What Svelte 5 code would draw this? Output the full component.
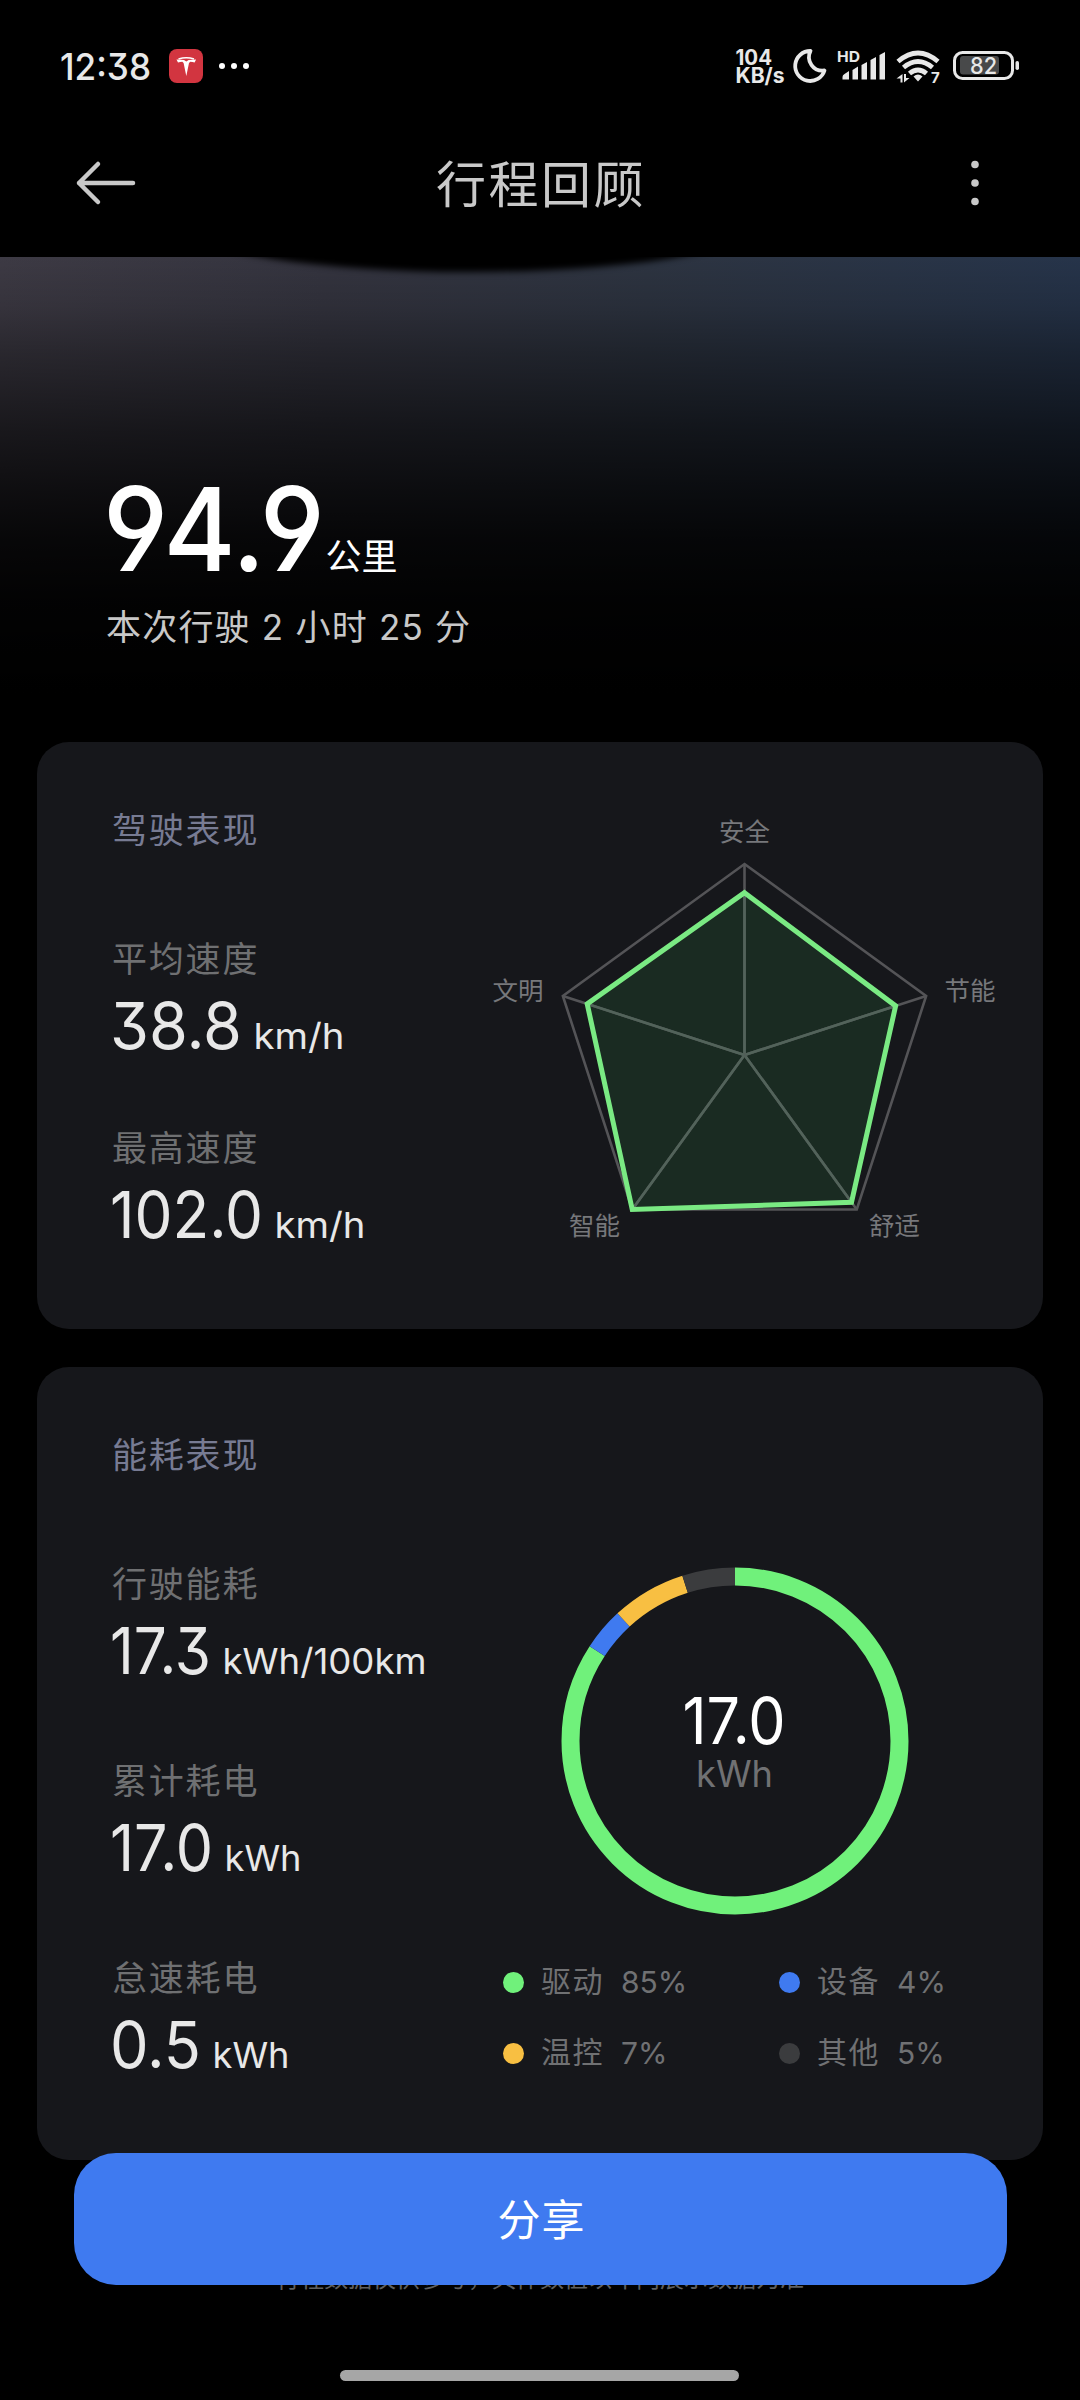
<script>
	const driving = [
		{ label: '平均速度', value: '38.8', unit: 'km/h', width: 127, unitWidth: 87 },
		{ label: '最高速度', value: '102.0', unit: 'km/h', width: 148, unitWidth: 87 }
	];

	const energy = [
		{ label: '行驶能耗', value: '17.3', unit: 'kWh/100km', width: 96, unitWidth: 200 },
		{ label: '累计耗电', value: '17.0', unit: 'kWh', width: 98, unitWidth: 73 },
		{ label: '怠速耗电', value: '0.5', unit: 'kWh', width: 86, unitWidth: 73 }
	];

	const usage = [
		{ name: '驱动', percent: 85, color: '#70f17b' },
		{ name: '设备', percent: 4, color: '#3f7af0' },
		{ name: '温控', percent: 7, color: '#f8bf42' },
		{ name: '其他', percent: 5, color: '#3b3c3e' }
	];

	const scores = [
		{ name: '安全', score: 0.85, x: 252.5, y: 61 },
		{ name: '节能', score: 0.832, x: 478, y: 219.5 },
		{ name: '舒适', score: 0.953, x: 402.5, y: 455 },
		{ name: '智能', score: 1, x: 102.5, y: 455 },
		{ name: '文明', score: 0.866, x: 26, y: 219.5 }
	];

	const cx = 252.5;
	const cy = 275;
	const radius = 191;

	function point(i, scale = 1) {
		const a = (i * 2 * Math.PI) / 5;
		return [cx + Math.sin(a) * radius * scale, cy - Math.cos(a) * radius * scale];
	}

	const outline = scores.map((_, i) => point(i).join(',')).join(' ');
	const area = scores.map((s, i) => point(i, s.score).join(',')).join(' ');

	// the rounded percentages do not add up to 100, so normalise them
	const total = usage.reduce((sum, u) => sum + u.percent, 0);
	const ring = 2 * Math.PI * 164.5;
	let start = 0;
	const segments = usage.map((u) => {
		const seg = { color: u.color, length: (u.percent / total) * ring, offset: start };
		start += seg.length;
		return seg;
	});
</script>

{#snippet metric(m)}
	<div class="metric">
		<div class="label">{m.label}</div>
		<svg width="340" height="74">
			<text class="value" x="-2" y="64" textLength={m.width + 5} lengthAdjust="spacingAndGlyphs">{m.value}</text>
			<text class="unit" x={m.width + 14.5} y="64" textLength={m.unitWidth + 4} lengthAdjust="spacingAndGlyphs">{m.unit}</text>
		</svg>
	</div>
{/snippet}

<main>
	<header>
		<div class="status">
			<svg width="1080" height="120" viewBox="0 0 1080 120">
				<text class="clock" x="60" y="79.5" textLength="91" lengthAdjust="spacingAndGlyphs">12:38</text>
				<rect x="169" y="49" width="34" height="34" rx="8" fill="#d23540" />
				<path d="M178.500 59q8-2.600 15.500 0" fill="none" stroke="#fff" stroke-width="1.500" />
				<g fill="#fff">
					<path d="M176.500 59.500q5 0 7.500.5l2.300 1.500 2.300-1.500q3-.5 7.500-.5l-1.500 3q-2-.8-4.300-.8l-1.300 1.300-2.700 13-2.700-13-1.300-1.300q-2.200 0-4.300.8z" />
					<circle cx="222" cy="66" r="3" />
					<circle cx="234" cy="66" r="3" />
					<circle cx="246" cy="66" r="3" />
				</g>
				<g class="speed">
					<text x="735.500" y="64.500" textLength="36.500" lengthAdjust="spacingAndGlyphs">104</text>
					<text x="735.500" y="82.500" textLength="49" lengthAdjust="spacingAndGlyphs">KB/s</text>
				</g>
				<path d="M810.500 51A15 15 0 1 0 824.500 70.500A13.500 13.500 0 0 1 810.500 51z" fill="none" stroke="#e8e8e8" stroke-width="3.800" stroke-linejoin="round" />
				<text class="hd" x="837" y="62" textLength="23" lengthAdjust="spacingAndGlyphs">HD</text>
				<g fill="#e8e8e8">
					<path d="M842.500 77q0-2 2-3l4.500-3v8.500h-6.500zM852.500 70l5.500-3.500v13h-5.500zM861.500 65l5.500-3v17.500h-5.500zM870.500 60l5.500-3v22.500h-5.500zM879.500 55l5.500-3v27.500h-5.500z" />
					<path d="M913.500 76.500q4.500-4 9 0l-4.500 5z" />
					<path d="M902.500 74v8.500h-2v-4h-4zM904 82.500v-8.500h2v4h3.500z" />
				</g>
				<g fill="none" stroke="#e8e8e8" stroke-width="4.800">
					<path d="M898 61.500q20-17 40 0M903.500 67.500q14.500-12 29 0M909.500 73.500q8.500-7 17 0" />
				</g>
				<text class="seven" x="931" y="82.500">7</text>
				<rect x="954.500" y="52.500" width="58" height="26" rx="8" fill="none" stroke="#e8e8e8" stroke-width="3" />
				<rect x="960" y="56" width="39" height="18.500" rx="3" fill="#48494a" />
				<rect x="1015.500" y="61" width="3.500" height="9" rx="1.700" fill="#e8e8e8" />
				<text class="battery" x="970" y="74" textLength="27" lengthAdjust="spacingAndGlyphs">82</text>
			</svg>
		</div>
		<nav>
			<svg width="60" height="48" viewBox="0 0 60 48">
				<path d="M23 5L4 24l19 19M4 24h54" fill="none" stroke="#c9c9c9" stroke-width="4.500" stroke-linecap="round" stroke-linejoin="round" />
			</svg>
			<h1>行程回顾</h1>
			<svg width="60" height="48" viewBox="0 0 60 48">
				<g fill="#c9c9c9">
					<circle cx="30" cy="5.500" r="3.800" />
					<circle cx="30" cy="24" r="3.800" />
					<circle cx="30" cy="42.500" r="3.800" />
				</g>
			</svg>
		</nav>
	</header>

	<section class="hero">
		<div class="shadow"></div>
		<svg width="400" height="120">
			<text class="distance" x="-3" y="96" textLength="222" lengthAdjust="spacingAndGlyphs">94.9</text>
			<text class="distance-unit" x="219.500" y="94.500">公里</text>
		</svg>
		<p>本次行驶 2 小时 25 分</p>
	</section>

	<section class="card driving">
		<div class="stats">
			<h2>驾驶表现</h2>
			<div class="metrics">
				{#each driving as m}
					{@render metric(m)}
				{/each}
			</div>
		</div>
		<svg class="radar" width="530" height="480">
			<polygon points={outline} fill="none" stroke="#545457" stroke-width="2.600" />
			<polygon points={area} fill="#1a2b22" />
			{#each scores as s, i}
				<line x1={cx} y1={cy} x2={point(i)[0]} y2={point(i)[1]} stroke="#545457" stroke-width="2.600" />
				<line x1={cx} y1={cy} x2={point(i, s.score)[0]} y2={point(i, s.score)[1]} stroke="#52635a" stroke-width="2.600" />
				<text x={s.x} y={s.y}>{s.name}</text>
			{/each}
			<polygon points={area} fill="none" stroke="#7aea83" stroke-width="5" />
		</svg>
	</section>

	<section class="card energy">
		<div class="stats">
			<h2>能耗表现</h2>
			<div class="metrics">
				{#each energy as m}
					{@render metric(m)}
				{/each}
			</div>
		</div>
		<div class="usage">
			<svg class="donut" width="348" height="348" viewBox="0 0 348 348">
				<g fill="none" stroke-width="18" transform="rotate(-90 174 174)">
					{#each segments as s}
						<circle cx="174" cy="174" r="164.500" stroke={s.color} stroke-dasharray="{s.length} {ring - s.length}" stroke-dashoffset={-s.offset} />
					{/each}
				</g>
				<text class="total" x="121.500" y="176.500" textLength="103" lengthAdjust="spacingAndGlyphs">17.0</text>
				<text class="total-unit" x="135" y="220" textLength="77" lengthAdjust="spacingAndGlyphs">kWh</text>
			</svg>
			<ul>
				{#each usage as u}
					<li>
						<i style="background: {u.color}"></i>
						<span>{u.name}</span>
						<b>{u.percent}%</b>
					</li>
				{/each}
			</ul>
		</div>
	</section>

	<p class="note">行程数据仅供参考，具体数值以车内展示数据为准</p>

	<button>分享</button>
	<div class="home"></div>
</main>

<style>
	:global(body) {
		background: #000;
	}

	main {
		position: relative;
		width: 1080px;
		height: 2400px;
		overflow: hidden;
		background: #000;
		color: #e8e8e8;
		font-family: Inter, 'Noto Sans CJK SC', sans-serif;
		font-feature-settings: 'cv09';
	}

	svg {
		display: block;
		flex: none;
		overflow: visible;
	}

	svg text {
		fill: #e8e8e8;
	}

	h1,
	h2,
	p,
	ul {
		margin: 0;
		padding: 0;
		font-weight: 400;
	}

	header {
		height: 257px;
	}

	.status {
		height: 120px;
	}

	.clock {
		font-size: 37px;
		font-weight: 500;
	}

	.speed {
		font-size: 21px;
		font-weight: 700;
	}

	.hd {
		font-size: 15px;
		font-weight: 700;
	}

	.seven {
		font-size: 15px;
		font-weight: 700;
	}

	.battery {
		font-size: 23px;
		font-weight: 500;
	}

	nav {
		display: flex;
		align-items: center;
		justify-content: space-between;
		height: 126px;
		padding: 0 75px;
	}

	h1 {
		padding: 3px 0 0 2px;
		font-size: 50px;
		line-height: 72px;
		letter-spacing: 2.500px;
		color: #c9c9c9;
	}

	.hero {
		position: relative;
		box-sizing: border-box;
		height: 485px;
		padding: 218px 106px 0;
		overflow: hidden;
		background:
			linear-gradient(to bottom, rgba(0, 0, 0, 0) 0%, rgba(0, 0, 0, 0.120) 10%, rgba(0, 0, 0, 0.330) 20%, rgba(0, 0, 0, 0.600) 36%, rgba(0, 0, 0, 0.760) 48%, rgba(0, 0, 0, 0.880) 58%, rgba(0, 0, 0, 0.960) 71%, #000 90%),
			linear-gradient(to right, #3d3a44 0%, #34343f 30%, #2d3441 60%, #26344a 100%);
	}

	.shadow {
		position: absolute;
		left: 190px;
		top: -76px;
		width: 560px;
		height: 91px;
		border-radius: 50%;
		background: #000;
		filter: blur(3px);
	}

	.distance {
		font-size: 116px;
		font-weight: 500;
		font-feature-settings: 'cv04';
	}

	.hero .distance,
	.hero .distance-unit {
		fill: #fff;
	}

	.distance-unit {
		font-size: 36px;
	}

	.hero p {
		margin-top: 6px;
		font-size: 35px;
		line-height: 52px;
		letter-spacing: 1.200px;
		color: #c8c8c8;
	}

	.card {
		display: flex;
		box-sizing: border-box;
		width: 1006px;
		margin: 0 37px 38px;
		padding-left: 75px;
		border-radius: 32px;
		background: #16171b;
	}

	.driving {
		height: 587px;
	}

	.energy {
		height: 793px;
		margin-bottom: 0;
	}

	.stats {
		width: 380px;
		padding-top: 62px;
	}

	h2 {
		font-size: 35px;
		line-height: 52px;
		letter-spacing: 1.800px;
		color: #777b93;
	}

	.metrics {
		display: flex;
		flex-direction: column;
		gap: 63px;
		padding-top: 77px;
	}

	.energy .metrics {
		gap: 71px;
	}

	.metric {
		height: 126px;
	}

	.label {
		font-size: 35px;
		line-height: 52px;
		letter-spacing: 1.800px;
		color: #6f7072;
	}

	.value {
		font-size: 65px;
	}

	.unit {
		font-size: 36px;
	}

	.radar {
		margin-top: 38px;
	}

	.radar text {
		font-size: 25.500px;
		fill: #77787b;
		text-anchor: middle;
	}

	.usage {
		padding-top: 200px;
	}

	.donut {
		margin-left: 68.500px;
	}

	.total {
		font-size: 65px;
	}

	.donut .total {
		fill: #fff;
	}

	.total-unit {
		font-size: 37px;
	}

	.donut .total-unit {
		fill: #707173;
	}

	ul {
		display: grid;
		grid-template-columns: 276px 220px;
		row-gap: 27px;
		margin: 45px 0 0 11px;
		list-style: none;
	}

	li {
		display: flex;
		align-items: center;
		height: 44px;
		font-size: 30px;
		line-height: 42px;
		color: #707173;
	}

	i {
		width: 21px;
		height: 21px;
		margin-right: 17px;
		border-radius: 50%;
	}

	li span {
		padding-bottom: 2px;
		letter-spacing: 1.500px;
	}

	li b {
		margin-left: 17px;
		font-weight: 400;
	}

	.note {
		margin-top: 101px;
		font-size: 24px;
		line-height: 36px;
		text-align: center;
		color: #5f6062;
	}

	button {
		position: absolute;
		left: 74px;
		top: 2153px;
		width: 933px;
		height: 132px;
		padding: 0 0 5px 2px;
		border: 0;
		border-radius: 42px;
		background: #3f7af0;
		color: #fff;
		font-family: inherit;
		font-size: 43px;
		letter-spacing: 1px;
	}

	.home {
		position: absolute;
		left: 340px;
		top: 2370px;
		width: 399px;
		height: 11px;
		border-radius: 6px;
		background: #a6a6a6;
	}
</style>
